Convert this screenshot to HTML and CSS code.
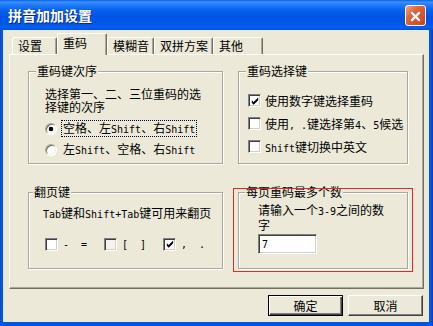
FILE: index.html
```html
<!DOCTYPE html>
<html lang="zh-CN">
<head>
  <meta charset="UTF-8" />
  <title>拼音加加设置</title>
  <link rel="stylesheet" href="styles.css">
</head>
<body>

  <div class="window">
    <div class="titlebar">
      <span class="title">拼音加加设置</span>
      <span class="close">
        <svg width="21" height="21" viewBox="0 0 21 21"><path d="M6.5 6.5 L14.5 14.5 M14.5 6.5 L6.5 14.5" stroke="#fff" stroke-width="2.4" stroke-linecap="round"/></svg>
      </span>
    </div>

    <div class="body">
      <div class="tabs">
        <span class="tab w45">设置</span>
        <span class="tab active w50">重码</span>
        <span class="tab w47">模糊音</span>
        <span class="tab w59">双拼方案</span>
        <span class="tab w50">其他</span>
      </div>

      <div class="panel">
        <div class="groups">

          <div class="group order">
            <div class="group-title">重码键次序</div>
            <p class="desc">选择第一、二、三位重码的选<br>择键的次序</p>
            <div class="opt">
              <span class="radio on"></span>
              <span class="lbl focus">空格、左<span class="en">Shift</span>、右<span class="en">Shift</span></span>
            </div>
            <div class="opt">
              <span class="radio"></span>
              <span class="lbl">左<span class="en">Shift</span>、空格、右<span class="en">Shift</span></span>
            </div>
          </div>

          <div class="group select">
            <div class="group-title">重码选择键</div>
            <div class="rows">
              <div class="row">
                <span class="check"><svg width="11" height="11" viewBox="0 0 11 11"><polygon points="2,4 4,6 9,1 9,4 4,9 2,7" fill="#000"/></svg></span>
                <span>使用数字键选择重码</span>
              </div>
              <div class="row">
                <span class="check"></span>
                <span>使用<span class="en">, .</span>键选择第<span class="en">4</span>、<span class="en">5</span>候选</span>
              </div>
              <div class="row">
                <span class="check"></span>
                <span><span class="en">Shift</span>键切换中英文</span>
              </div>
            </div>
          </div>

          <div class="group paging">
            <div class="group-title">翻页键</div>
            <p class="desc"><span class="en">Tab</span>键和<span class="en">Shift+Tab</span>键可用来翻页</p>
            <div class="keys">
              <div class="key"><span class="check"></span><span class="en keytext">-  =</span></div>
              <div class="key"><span class="check dim"></span><span class="en keytext">[  ]</span></div>
              <div class="key">
                <span class="check"><svg width="11" height="11" viewBox="0 0 11 11"><polygon points="2,4 4,6 9,1 9,4 4,9 2,7" fill="#000"/></svg></span>
                <span class="en keytext">,  .</span>
              </div>
            </div>
          </div>

          <div class="marked">
            <div class="group count">
              <div class="group-title">每页重码最多个数</div>
              <p class="desc">请输入一个<span class="en">3-9</span>之间的数<br>字</p>
              <input class="num" type="text" value="7">
            </div>
          </div>

        </div>
      </div>

      <div class="actions">
        <button class="btn default">确定</button>
        <button class="btn">取消</button>
      </div>
    </div>
  </div>

</body>
</html>
```

FILE: styles.css
```css
body {
  margin: 0;
  font-family: "Noto Sans CJK SC", sans-serif;
  font-size: 12px;
  color: #000;
  background: #fff;
}

.window {
  width: 433px;
  height: 326px;
  display: flex;
  flex-direction: column;
  background: linear-gradient(to right, #0a3fc8 0, #0858e6 1px, #0054e3 3px, #0054e3 429px, #0858e6 431px, #0a3fc8 432px);
}

.titlebar {
  height: 30px;
  flex: none;
  display: flex;
  align-items: center;
  justify-content: space-between;
  padding: 0 7px 0 8px;
  background: linear-gradient(#0a5ee8 0, #3d8fff 2px, #1f7bfb 5px, #0862ee 10px, #0054e3 17px, #0056e8 24px, #0062f6 27px, #0050d8 30px);
}

.title {
  color: #fff;
  font-size: 14px;
  font-weight: bold;
  text-shadow: 1px 1px 0 #0a2a8a;
}

.close {
  width: 21px;
  height: 21px;
  box-sizing: border-box;
  border: 1px solid #fff;
  border-radius: 3px;
  background: linear-gradient(135deg, #f0a58a 0, #e0663f 35%, #c9421a 100%);
  display: flex;
}

.body {
  flex: 1;
  margin: 0 4px 4px 3px;
  background: #ece9d8;
}

/* tabs */

.tabs {
  height: 21px;
  margin-top: 3px;
  padding-left: 9px;
  display: flex;
  align-items: flex-end;
}

.tab {
  height: 17px;
  box-sizing: border-box;
  padding-left: 5px;
  line-height: 16px;
  border: 1px solid;
  border-bottom: none;
  border-color: #fff #716f64 transparent #fff;
  border-radius: 2px 2px 0 0;
  box-shadow: inset -1px 0 0 #aca899;
  background: #ece9d8;
}

.tab.active {
  height: 22px;
  margin-bottom: -1px;
  line-height: 18px;
  position: relative;
  z-index: 1;
}

.w45 { width: 45px; }
.w47 { width: 47px; }
.w50 { width: 50px; }
.w59 { width: 59px; }

.panel {
  margin-left: 6px;
  width: 415px;
  height: 235px;
  box-sizing: border-box;
  border: 1px solid;
  border-color: #fff #716f64 #716f64 #fff;
  box-shadow: inset -1px -1px 0 #aca899;
  padding: 16px 0 0 18px;
}

.groups {
  display: grid;
  grid-template-columns: 195px 170px;
  column-gap: 15px;
  row-gap: 28px;
}

/* group boxes */

.group {
  border: 1px solid #aca899;
  box-shadow: inset 1px 1px 0 #fff, 1px 1px 0 #fff;
}

.group-title {
  width: fit-content;
  margin-top: -7px;
  padding: 0 1px;
  height: 12px;
  line-height: 12px;
  background: #ece9d8;
}

.desc {
  margin: 0;
  line-height: 13px;
}

.en {
  font-family: "DejaVu Sans Mono", monospace;
  font-size: 10px;
  white-space: pre;
}

.order {
  padding: 0 0 3px 16px;
}

.order .group-title {
  margin-left: -9px;
}

.order .desc {
  margin-top: 10px;
  margin-bottom: 5px;
}

.opt {
  height: 21px;
  display: flex;
  align-items: center;
  gap: 4px;
}

.lbl {
  padding: 0 1px;
  line-height: 13px;
  border: 1px dotted transparent;
}

.lbl.focus {
  border-color: #000;
}

.radio {
  width: 12px;
  height: 12px;
  box-sizing: border-box;
  border-radius: 50%;
  border: 1px solid;
  border-color: #aca899 #fff #fff #aca899;
  box-shadow: inset 1px 1px 0 #716f64, inset -1px -1px 0 #f1efe2;
  background: #fff;
}

.radio.on {
  background: radial-gradient(circle, #000 0, #000 2px, #fff 2.6px);
}

.check {
  width: 13px;
  height: 13px;
  flex: none;
  box-sizing: border-box;
  border: 1px solid;
  border-color: #808080 #fff #fff #808080;
  box-shadow: inset 1px 1px 0 #404040, inset -1px -1px 0 #d4d0c8;
  background: #fff;
  display: flex;
  align-items: center;
  justify-content: center;
}

.check svg {
  margin: 1px 0 0 1px;
}

.check.dim {
  background: #f4f3ee;
}

.select {
  padding-left: 9px;
}

.select .group-title {
  margin-left: -2px;
}

.rows {
  margin-top: 12px;
}

.row {
  height: 23px;
  display: flex;
  align-items: center;
  gap: 4px;
}

.paging {
  padding: 0 0 14px 14px;
}

.paging .group-title {
  margin-left: -10px;
}

.paging .desc {
  margin-top: 8px;
}

.keys {
  margin: 13px 0 0 2px;
  height: 20px;
  display: flex;
  align-items: center;
  gap: 17px;
}

.key {
  display: flex;
  align-items: center;
  gap: 5px;
}

.keytext {
  width: 24px;
}

/* red annotation frame */

.marked {
  position: relative;
  display: flex;
}

.marked::after {
  content: "";
  position: absolute;
  top: -4px;
  left: -5px;
  right: -5px;
  bottom: -3px;
  border: 1px solid #dd2a2a;
  pointer-events: none;
}

.count {
  flex: 1;
  padding-left: 19px;
}

.count .group-title {
  margin-left: -13px;
}

.count .desc {
  margin-top: 5px;
}

.num {
  display: block;
  margin-top: 3px;
  width: 59px;
  height: 20px;
  box-sizing: border-box;
  border: 1px solid;
  border-color: #808080 #fff #fff #808080;
  box-shadow: inset 1px 1px 0 #404040, inset -1px -1px 0 #d4d0c8;
  background: #fff;
  padding: 0 0 0 3px;
  font-family: "DejaVu Sans Mono", monospace;
  font-size: 10px;
  outline: none;
}

/* buttons */

.actions {
  display: flex;
  justify-content: flex-end;
  gap: 5px;
  padding: 6px 6px 0 0;
}

.btn {
  width: 75px;
  height: 21px;
  box-sizing: border-box;
  padding: 0;
  border: 1px solid;
  border-color: #fff #404040 #404040 #fff;
  box-shadow: inset -1px -1px 0 #808080;
  background: #ece9d8;
  font-family: inherit;
  font-size: 12px;
  color: #000;
}

.btn.default {
  border-color: #000;
  box-shadow: inset 1px 1px 0 #fff, inset -1px -1px 0 #404040, inset -2px -2px 0 #808080;
}
```
